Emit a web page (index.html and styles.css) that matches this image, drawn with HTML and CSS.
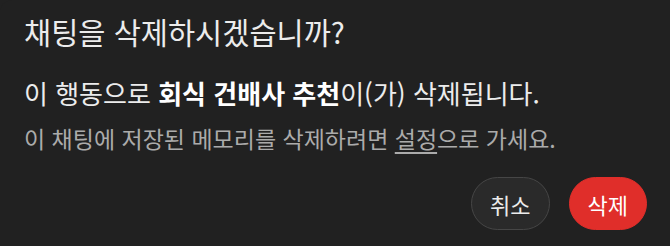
FILE: index.html
```html
<!DOCTYPE html>
<html lang="ko">
<head>
  <meta charset="UTF-8">
  <title>채팅 삭제</title>
  <link rel="stylesheet" href="styles.css">
</head>
<body>
  <div class="dialog">
    <h2 class="dialog-title">채팅을 삭제하시겠습니까?</h2>
    <div class="dialog-body">
      <p class="main-text">이 행동으로 <strong>회식 건배사 추천</strong>이(가) 삭제됩니다.</p>
      <p class="sub-text">이 채팅에 저장된 메모리를 삭제하려면 <a href="#" class="link">설정</a>으로 가세요.</p>
    </div>
    <div class="actions">
      <button class="btn btn-cancel">취소</button>
      <button class="btn btn-delete">삭제</button>
    </div>
  </div>
</body>
</html>
```

FILE: styles.css
```css
body {
  margin: 0;
  background: #212121;
  font-family: "Noto Sans CJK KR", "Noto Sans", sans-serif;
  color: #ececec;
}

.dialog {
  width: 670px;
  height: 246px;
  box-sizing: border-box;
  padding: 11px 23px 0 24px;
  background: #212121;
  border-radius: 12px 0 0 0;
}

.dialog-title {
  margin: 0;
  font-size: 29.5px;
  font-weight: 400;
  line-height: 40px;
}

.dialog-body {
  margin-top: 25px;
}

.main-text {
  margin: 0;
  font-size: 26px;
  line-height: 34px;
}

.main-text strong {
  font-weight: 700;
  color: #fff;
}

.sub-text {
  margin: 12px 0 0;
  font-size: 23px;
  line-height: 32px;
  color: #ababab;
}

.link {
  color: #ababab;
  text-decoration: underline;
  text-underline-offset: 4px;
}

.actions {
  display: flex;
  justify-content: flex-end;
  gap: 19px;
  margin-top: 23px;
}

.btn {
  height: 53px;
  padding: 0 18px;
  border-radius: 27px;
  font-family: inherit;
  font-size: 22px;
  cursor: pointer;
}

.btn-cancel {
  background: #2a2a2a;
  border: 1px solid #464646;
  color: #ececec;
}

.btn-delete {
  background: #e02e2a;
  border: 1px solid #e02e2a;
  color: #fff;
}
```
